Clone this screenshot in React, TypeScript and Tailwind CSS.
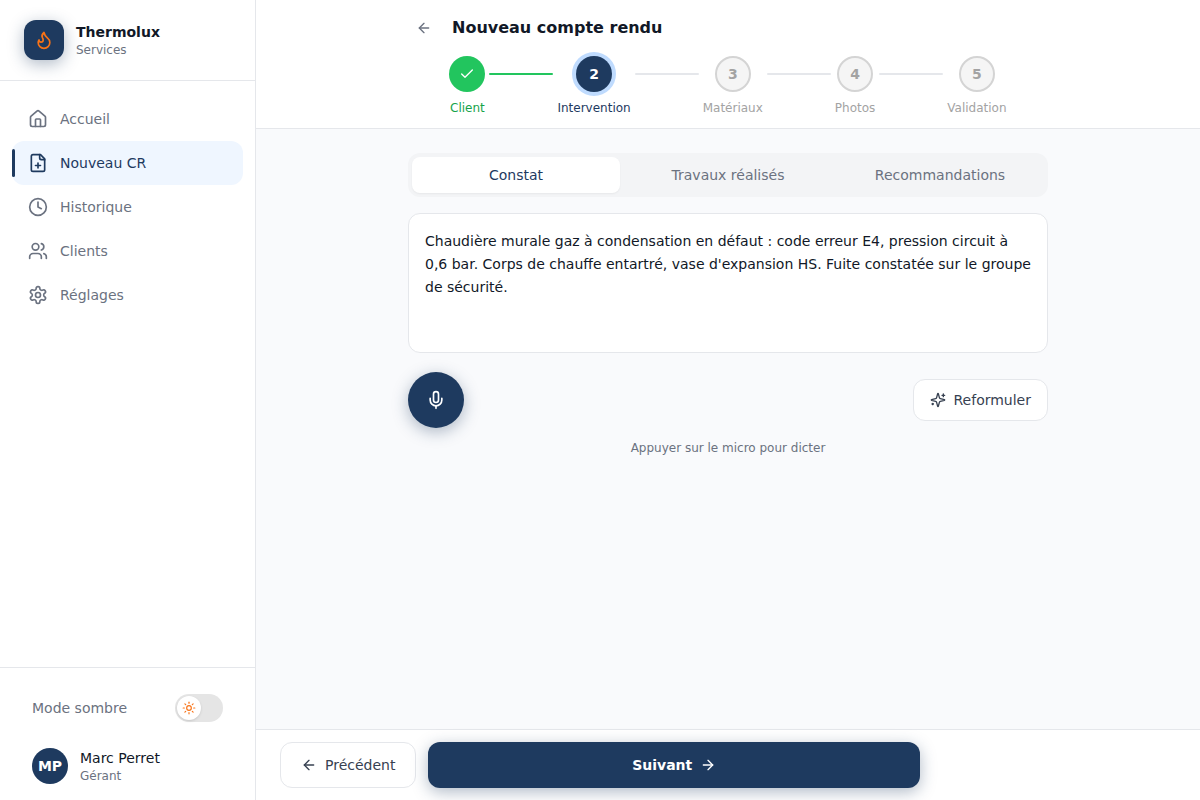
import React, { useState } from "react";
import {
  ArrowLeft,
  ArrowRight,
  Check,
  Clock,
  House,
  Mic,
  Sun,
  Users,
} from "lucide-react";

type IconProps = {
  size?: number;
  className?: string;
};

type NavItem = {
  label: string;
  icon: React.ComponentType<IconProps>;
};

const Icon: React.FC<IconProps & { children: React.ReactNode }> = ({
  size = 20,
  className,
  children,
}) => (
  <svg
    width={size}
    height={size}
    viewBox="0 0 24 24"
    fill="none"
    stroke="currentColor"
    strokeWidth={2}
    strokeLinecap="round"
    strokeLinejoin="round"
    aria-hidden="true"
    className={className}
  >
    {children}
  </svg>
);

const FlameIcon: React.FC<IconProps> = props => (
  <Icon {...props}>
    <path d="M8.5 14.5A2.5 2.5 0 0 0 11 12c0-1.38-.5-2-1-3-1.072-2.143-.224-4.054 2-6 .5 2.5 2 4.9 4 6.5 2 1.6 3 3.5 3 5.5a7 7 0 1 1-14 0c0-1.153.433-2.294 1-3a2.5 2.5 0 0 0 2.5 2.5z" />
  </Icon>
);

const FilePlusIcon: React.FC<IconProps> = props => (
  <Icon {...props}>
    <path d="M15 2H6a2 2 0 0 0-2 2v16a2 2 0 0 0 2 2h12a2 2 0 0 0 2-2V7Z" />
    <path d="M14 2v4a2 2 0 0 0 2 2h4" />
    <path d="M9 15h6" />
    <path d="M12 18v-6" />
  </Icon>
);

const GearIcon: React.FC<IconProps> = props => (
  <Icon {...props}>
    <path d="M12.22 2h-.44a2 2 0 0 0-2 2v.18a2 2 0 0 1-1 1.73l-.43.25a2 2 0 0 1-2 0l-.15-.08a2 2 0 0 0-2.73.73l-.22.38a2 2 0 0 0 .73 2.73l.15.1a2 2 0 0 1 1 1.72v.51a2 2 0 0 1-1 1.74l-.15.09a2 2 0 0 0-.73 2.73l.22.38a2 2 0 0 0 2.73.73l.15-.08a2 2 0 0 1 2 0l.43.25a2 2 0 0 1 1 1.73V20a2 2 0 0 0 2 2h.44a2 2 0 0 0 2-2v-.18a2 2 0 0 1 1-1.73l.43-.25a2 2 0 0 1 2 0l.15.08a2 2 0 0 0 2.73-.73l.22-.39a2 2 0 0 0-.73-2.73l-.15-.08a2 2 0 0 1-1-1.74v-.5a2 2 0 0 1 1-1.74l.15-.09a2 2 0 0 0 .73-2.73l-.22-.38a2 2 0 0 0-2.73-.73l-.15.08a2 2 0 0 1-2 0l-.43-.25a2 2 0 0 1-1-1.73V4a2 2 0 0 0-2-2z" />
    <circle cx="12" cy="12" r="3" />
  </Icon>
);

const SparklesIcon: React.FC<IconProps> = props => (
  <Icon {...props}>
    <path d="M9.937 15.5A2 2 0 0 0 8.5 14.063l-6.135-1.582a.5.5 0 0 1 0-.962L8.5 9.936A2 2 0 0 0 9.937 8.5l1.582-6.135a.5.5 0 0 1 .963 0L14.063 8.5A2 2 0 0 0 15.5 9.937l6.135 1.581a.5.5 0 0 1 0 .964L15.5 14.063a2 2 0 0 0-1.437 1.437l-1.582 6.135a.5.5 0 0 1-.963 0z" />
    <path d="M20 3v4" />
    <path d="M22 5h-4" />
    <path d="M4 17v2" />
    <path d="M5 18H3" />
  </Icon>
);

const navItems: NavItem[] = [
  { label: "Accueil", icon: House },
  { label: "Nouveau CR", icon: FilePlusIcon },
  { label: "Historique", icon: Clock },
  { label: "Clients", icon: Users },
  { label: "Réglages", icon: GearIcon },
];

const steps = ["Client", "Intervention", "Matériaux", "Photos", "Validation"];

const tabs = ["Constat", "Travaux réalisés", "Recommandations"];

const Sidebar: React.FC = () => {
  const [dark, setDark] = useState(false);
  return (
    <aside className="flex w-64 shrink-0 flex-col border-r border-[#e5e7eb] bg-white">
      <div className="flex items-center gap-3 border-b border-[#e5e7eb] px-6 py-5">
        <div className="flex size-10 items-center justify-center rounded-xl bg-[#1e3a5f] shadow-[0_4px_16px_rgba(30,58,95,0.35)]">
          <FlameIcon size={20} className="text-[#f97316]" />
        </div>
        <div>
          <div className="text-sm font-bold text-[#111827]">Thermolux</div>
          <div className="text-xs text-[#6b7280]">Services</div>
        </div>
      </div>
      <nav className="flex-1 px-3 py-4">
        {navItems.map(({ label, icon: NavIcon }) => {
          const active = label === "Nouveau CR";
          return (
            <a
              key={label}
              href="#"
              aria-current={active ? "page" : undefined}
              className={`relative flex h-11 items-center gap-3 rounded-xl px-4 text-sm font-medium ${
                active ? "bg-[#eff6ff] text-[#1e3a5f]" : "text-[#6b7280]"
              }`}
            >
              {active && (
                <span className="absolute inset-y-2 left-0 w-[3px] rounded-full bg-[#1e3a5f]" />
              )}
              <NavIcon size={20} />
              {label}
            </a>
          );
        })}
      </nav>
      <div className="border-t border-[#e5e7eb] p-4">
        <label className="flex h-12 items-center justify-between px-4 text-sm text-[#6b7280]">
          Mode sombre
          <input
            type="checkbox"
            role="switch"
            className="peer sr-only"
            checked={dark}
            onChange={() => setDark(!dark)}
          />
          <span className="flex h-7 w-12 items-center rounded-full bg-[#e5e5e5] p-0.5 peer-checked:justify-end">
            <span className="flex size-6 items-center justify-center rounded-full bg-white shadow-sm">
              <Sun size={14} className="text-[#f97316]" />
            </span>
          </span>
        </label>
        <div className="mt-4 flex items-center gap-3 px-4">
          <div className="flex size-9 items-center justify-center rounded-full bg-[#1e3a5f] text-sm font-bold text-white">
            MP
          </div>
          <div>
            <div className="text-sm font-medium text-[#111827]">
              Marc Perret
            </div>
            <div className="text-xs text-[#6b7280]">Gérant</div>
          </div>
        </div>
      </div>
    </aside>
  );
};

type StepperProps = {
  current: number;
};

const Stepper: React.FC<StepperProps> = ({ current }) => {
  return (
    <ol className="mt-3 flex items-start justify-center gap-1">
      {steps.map((label, i) => {
        const done = i < current;
        const active = i === current;
        return (
          <React.Fragment key={label}>
            {i > 0 && (
              <li
                aria-hidden="true"
                className={`mt-[17px] h-0.5 w-16 rounded-full ${
                  i <= current ? "bg-[#22c55e]" : "bg-[#e5e7eb]"
                }`}
              />
            )}
            <li className="flex flex-col items-center gap-2">
              <div
                className={`flex size-9 items-center justify-center rounded-full text-sm font-bold ${
                  done
                    ? "bg-[#22c55e] text-white"
                    : active
                      ? "bg-[#1e3a5f] text-white ring-4 ring-[#bfdbfe]"
                      : "border-2 border-[#d4d4d4] bg-[#f5f5f5] text-[#a3a3a3]"
                }`}
              >
                {done ? <Check size={16} /> : i + 1}
              </div>
              <span
                className={`text-xs font-medium ${
                  done
                    ? "text-[#16a34a]"
                    : active
                      ? "text-[#1e3a5f]"
                      : "text-[#a3a3a3]"
                }`}
              >
                {label}
              </span>
            </li>
          </React.Fragment>
        );
      })}
    </ol>
  );
};

const App: React.FC = () => {
  const [tab, setTab] = useState("Constat");
  const [text, setText] = useState(
    "Chaudière murale gaz à condensation en défaut : code erreur E4, pression circuit à 0,6 bar. Corps de chauffe entartré, vase d'expansion HS. Fuite constatée sur le groupe de sécurité."
  );
  return (
    <div className="flex h-screen bg-[#f9fafc] font-['DejaVu_Sans',sans-serif]">
      <Sidebar />
      <div className="flex min-w-0 flex-1 flex-col">
        <header className="border-b border-[#e5e7eb] bg-white">
          <div className="mx-auto max-w-2xl px-4 py-3">
            <div className="flex items-center gap-3">
              <button
                aria-label="Retour"
                className="rounded-lg p-2 text-[#6b7280]"
              >
                <ArrowLeft size={16} />
              </button>
              <h1 className="text-base font-bold text-[#111827]">
                Nouveau compte rendu
              </h1>
            </div>
            <Stepper current={1} />
          </div>
        </header>
        <main className="flex-1 overflow-y-auto">
          <div className="mx-auto max-w-2xl px-4 py-6">
            <div
              role="tablist"
              className="grid grid-cols-3 gap-1 rounded-xl bg-[#f3f4f6] p-1"
            >
              {tabs.map(t => (
                <button
                  key={t}
                  role="tab"
                  aria-selected={t === tab}
                  onClick={() => setTab(t)}
                  className={`rounded-lg py-2 text-sm font-medium ${
                    t === tab
                      ? "bg-white text-[#1e3a5f] shadow-[0_1px_2px_rgba(0,0,0,0.05)]"
                      : "text-[#6b7280]"
                  }`}
                >
                  {t}
                </button>
              ))}
            </div>
            <textarea
              aria-label={tab}
              value={text}
              onChange={e => setText(e.target.value)}
              className="mt-4 block h-[140px] w-full resize-none rounded-xl border border-[#e5e7eb] bg-white p-4 text-sm leading-[23px] text-[#111827] focus:outline-none"
            />
            <div className="mt-[19px] flex items-center justify-between">
              <button
                aria-label="Dicter"
                className="flex size-14 items-center justify-center rounded-full bg-[#1e3a5f] text-white shadow-[0_4px_16px_rgba(30,58,95,0.35)]"
              >
                <Mic size={20} />
              </button>
              <button className="flex items-center gap-2 rounded-xl border border-[#e5e7eb] bg-white px-4 py-2.5 text-sm font-medium text-[#374151]">
                <SparklesIcon size={16} />
                Reformuler
              </button>
            </div>
            <p className="mt-3 text-center text-xs text-[#6b7280]">
              Appuyer sur le micro pour dicter
            </p>
          </div>
        </main>
        <footer className="border-t border-[#e5e7eb] bg-white px-6 py-3">
          <div className="flex max-w-160 gap-3">
            <button className="flex items-center gap-2 rounded-xl border border-[#e5e7eb] bg-white px-5 py-3 text-sm font-medium text-[#374151]">
              <ArrowLeft size={16} />
              Précédent
            </button>
            <button className="flex flex-1 items-center justify-center gap-2 rounded-xl bg-[#1e3a5f] py-3 text-sm font-semibold text-white shadow-[0_4px_16px_rgba(30,58,95,0.35)]">
              Suivant
              <ArrowRight size={16} />
            </button>
          </div>
        </footer>
      </div>
    </div>
  );
};

export default App;
